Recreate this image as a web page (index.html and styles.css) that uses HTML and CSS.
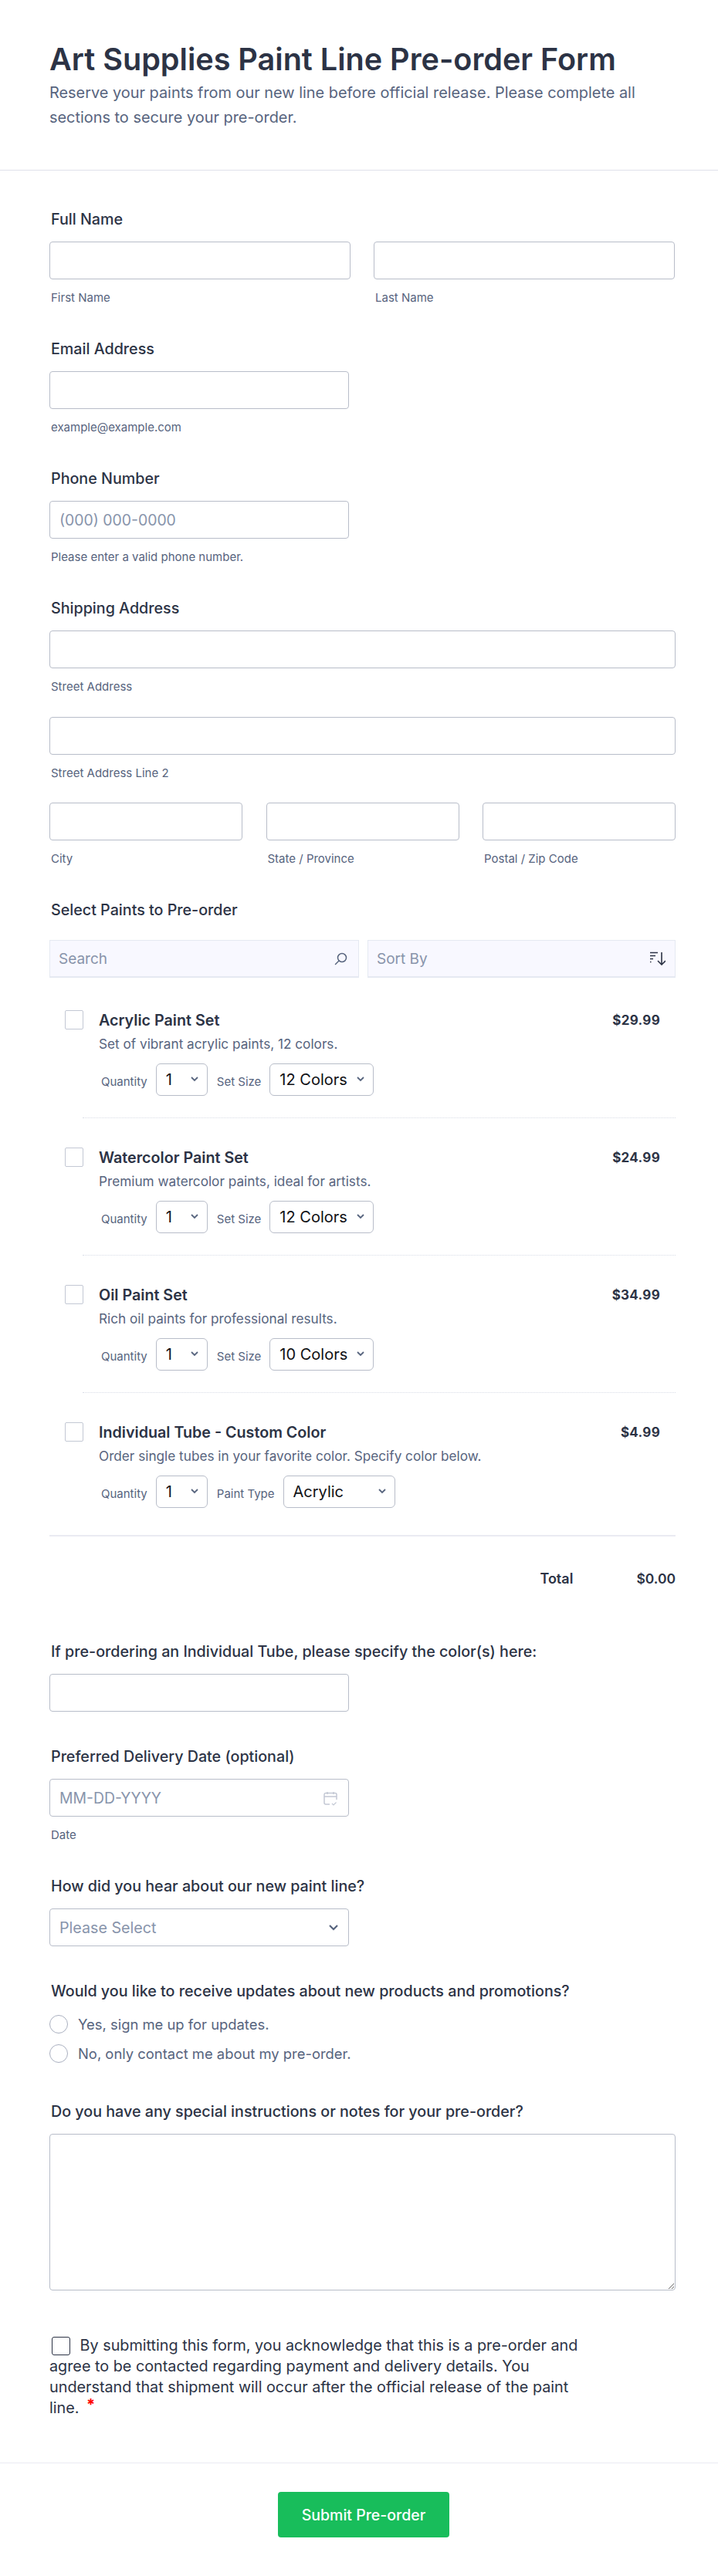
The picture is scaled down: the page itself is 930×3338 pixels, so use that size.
FILE: index.html
```html
<!DOCTYPE html>
<html lang="en">
<head>
    <meta charset="UTF-8">
    <meta name="viewport" content="width=device-width, initial-scale=1.0">
    <title>Art Supplies Paint Line Pre-order Form</title>
    <link rel="stylesheet" href="styles.css">
</head>
<body>
    <div class="header">
        <h1>Art Supplies Paint Line Pre-order Form</h1>
        <p>Reserve your paints from our new line before official release. Please complete all sections to secure your pre-order.</p>
    </div>
    <form class="form">
        <div class="field">
            <label class="label">Full Name</label>
            <div class="row two">
                <div><input type="text"><span class="sub">First Name</span></div>
                <div><input type="text"><span class="sub">Last Name</span></div>
            </div>
        </div>
        <div class="field half">
            <label class="label">Email Address</label>
            <input type="text">
            <span class="sub">example@example.com</span>
        </div>
        <div class="field half">
            <label class="label">Phone Number</label>
            <input type="text" placeholder="(000) 000-0000">
            <span class="sub">Please enter a valid phone number.</span>
        </div>
        <div class="field">
            <label class="label">Shipping Address</label>
            <div class="line"><input type="text"><span class="sub">Street Address</span></div>
            <div class="line"><input type="text"><span class="sub">Street Address Line 2</span></div>
            <div class="row three">
                <div><input type="text"><span class="sub">City</span></div>
                <div><input type="text"><span class="sub">State / Province</span></div>
                <div><input type="text"><span class="sub">Postal / Zip Code</span></div>
            </div>
        </div>
        <div class="field products">
            <label class="label">Select Paints to Pre-order</label>
            <div class="tools">
                <div class="tool search">
                    <span>Search</span>
                    <svg width="17" height="17" viewBox="0 0 17 17" fill="none" stroke="#57647e" stroke-width="1.5"><circle cx="10" cy="7" r="5.500"/><path d="M6 11 1.500 15.500" stroke-linecap="round"/></svg>
                </div>
                <div class="tool">
                    <span>Sort By</span>
                    <svg width="20" height="18" viewBox="0 0 20 18" fill="none" stroke="#2c3345" stroke-width="1.6"><path d="M0 1.500h10M0 5.500h7M0 9.500h4M0 13.500h1.500"/><path d="M15 1v16M10 12l5 5 5-5"/></svg>
                </div>
            </div>

            <div class="item">
                <input type="checkbox" class="check">
                <div class="item-body">
                    <div class="item-top"><b>Acrylic Paint Set</b><strong>$29.99</strong></div>
                    <p>Set of vibrant acrylic paints, 12 colors.</p>
                    <div class="options">
                        <span>Quantity</span>
                        <select class="qty"><option>1</option></select>
                        <span>Set Size</span>
                        <select class="size"><option>12 Colors</option></select>
                    </div>
                </div>
            </div>
            <div class="item">
                <input type="checkbox" class="check">
                <div class="item-body">
                    <div class="item-top"><b>Watercolor Paint Set</b><strong>$24.99</strong></div>
                    <p>Premium watercolor paints, ideal for artists.</p>
                    <div class="options">
                        <span>Quantity</span>
                        <select class="qty"><option>1</option></select>
                        <span>Set Size</span>
                        <select class="size"><option>12 Colors</option></select>
                    </div>
                </div>
            </div>
            <div class="item">
                <input type="checkbox" class="check">
                <div class="item-body">
                    <div class="item-top"><b>Oil Paint Set</b><strong>$34.99</strong></div>
                    <p>Rich oil paints for professional results.</p>
                    <div class="options">
                        <span>Quantity</span>
                        <select class="qty"><option>1</option></select>
                        <span>Set Size</span>
                        <select class="size"><option>10 Colors</option></select>
                    </div>
                </div>
            </div>
            <div class="item last">
                <input type="checkbox" class="check">
                <div class="item-body">
                    <div class="item-top"><b>Individual Tube - Custom Color</b><strong>$4.99</strong></div>
                    <p>Order single tubes in your favorite color. Specify color below.</p>
                    <div class="options">
                        <span>Quantity</span>
                        <select class="qty"><option>1</option></select>
                        <span>Paint Type</span>
                        <select class="type"><option>Acrylic</option></select>
                    </div>
                </div>
            </div>
            <div class="total"><b>Total</b><strong>$0.00</strong></div>
        </div>
        <div class="field half">
            <label class="label">If pre-ordering an Individual Tube, please specify the color(s) here:</label>
            <input type="text">
        </div>
        <div class="field half">
            <label class="label">Preferred Delivery Date (optional)</label>
            <div class="date">
                <input type="text" placeholder="MM-DD-YYYY">
                <svg width="18" height="19" viewBox="0 0 18 19" fill="none" stroke="#c3c8d4" stroke-width="1.500"><path d="M8 17H3a2 2 0 0 1-2-2V4.500a2 2 0 0 1 2-2h12a2 2 0 0 1 2 2V11M1 7h16M5 1v3M13 1v3"/><path d="m11 16 2 2 3.500-3.500" stroke-width="1.200"/></svg>
            </div>
            <span class="sub">Date</span>
        </div>
        <div class="field half">
            <label class="label">How did you hear about our new paint line?</label>
            <select class="dropdown"><option>Please Select</option></select>
        </div>
        <div class="field radio-field">
            <label class="label">Would you like to receive updates about new products and promotions?</label>
            <div class="radios">
                <label><input type="radio" name="updates"> Yes, sign me up for updates.</label>
                <label><input type="radio" name="updates"> No, only contact me about my pre-order.</label>
            </div>
        </div>
        <div class="field">
            <label class="label">Do you have any special instructions or notes for your pre-order?</label>
            <textarea></textarea>
        </div>
        <div class="agree">
            <input type="checkbox"> By submitting this form, you acknowledge that this is a pre-order and agree to be contacted regarding payment and delivery details. You understand that shipment will occur after the official release of the paint line. <span class="req">*</span>
        </div>
    </form>
    <div class="footer">
        <button type="button">Submit Pre-order</button>
    </div>
</body>
</html>
```

FILE: styles.css
```css
* {
    box-sizing: border-box;
}
body {
    font-family: 'Inter', sans-serif;
    margin: 0;
    padding: 0;
    background-color: #fff;
    color: #2c3345;
}
.header {
    height: 221px;
    padding: 50px 55px 0 64px;
    border-bottom: 1px solid #dfe1ea;
}
.header h1 {
    margin: 0;
    font-size: 39.600px;
    line-height: 54px;
    font-weight: 600;
}
.header p {
    margin: 0;
    font-size: 19.900px;
    line-height: 32px;
    color: #57647e;
}
.form {
    padding: 51px 55px 0 64px;
}
.field {
    margin-bottom: 46px;
}
.half {
    width: 388px;
}
.label {
    display: block;
    font-size: 19.700px;
    line-height: 24px;
    font-weight: 450;
    margin-bottom: 17px;
    padding-left: 2px;
    white-space: nowrap;
}
.sub {
    display: block;
    font-size: 15px;
    line-height: 16px;
    margin-top: 16px;
    padding-left: 2px;
    color: #57647e;
}
input[type="text"] {
    display: block;
    width: 100%;
    height: 49px;
    padding: 0 12px;
    border: 1px solid #b8bdc9;
    border-radius: 4px;
    font-family: inherit;
    font-size: 19.400px;
    color: #2c3345;
    background-color: #fff;
}
input::placeholder {
    color: #8894ab;
    opacity: 1;
}
.row {
    display: grid;
}
.two {
    grid-template-columns: 390px 390px;
    gap: 30px;
}
.three {
    grid-template-columns: repeat(3, 250px);
    gap: 30.500px;
}
.line {
    margin-bottom: 30.500px;
}
.products {
    margin-bottom: 0;
}
.tools {
    display: flex;
    gap: 11px;
    margin-top: 27px;
}
.tool {
    flex: 1;
    height: 49px;
    display: flex;
    align-items: center;
    justify-content: space-between;
    padding: 0 12px 0 11px;
    background-color: #f8f8ff;
    border: 1px solid #e5e9f2;
    border-bottom-width: 2px;
    font-size: 19px;
    color: #8894ab;
}
.tool.search {
    padding-right: 14px;
}
.item {
    display: flex;
    margin-left: 43px;
    padding: 39px 0 28px;
    border-bottom: 1px dotted #d8dce6;
}
.tools + .item {
    padding-top: 43px;
}
.item.last {
    margin-left: 0;
    padding: 39px 0 35px 20px;
    border-bottom: 2px solid #eaebf2;
}
.check {
    appearance: none;
    flex: none;
    width: 24px;
    height: 25px;
    margin: -1px 20px 0 -23px;
    border: 1px solid #c3c8d4;
    border-radius: 2px;
    background-color: #fff;
}
.item.last .check {
    margin-left: 0;
}
.item-body {
    flex: 1;
}
.item-top {
    display: flex;
    justify-content: space-between;
    align-items: center;
    padding-right: 20px;
    line-height: 24px;
}
.item-top b {
    font-size: 19.700px;
    font-weight: 600;
}
.item-top strong {
    font-size: 17px;
    font-weight: 700;
    letter-spacing: 0.3px;
}
.item-body p {
    margin: 7px 0 0;
    font-size: 17.200px;
    line-height: 24px;
    color: #57647e;
}
.options {
    display: flex;
    align-items: center;
    margin-top: 13px;
    font-size: 15px;
    color: #57647e;
}
.options span {
    margin: 4px 11px 0 3px;
}
.options select {
    margin-right: 9px;
}
select {
    appearance: none;
    height: 42px;
    padding: 0 10px 0 12px;
    border: 1px solid #b8bdc9;
    border-radius: 6px;
    font-family: inherit;
    font-size: 20px;
    color: #0f1014;
    background: #fff url("data:image/svg+xml,%3Csvg xmlns='http://www.w3.org/2000/svg' width='10' height='7' fill='none' stroke='%2357647e' stroke-width='1.800'%3E%3Cpath d='m1 1 4 4 4-4'/%3E%3C/svg%3E") no-repeat right 11px top 16px;
}
.qty {
    width: 67px;
}
.size {
    width: 135px;
}
.type {
    width: 145px;
}
.total {
    display: flex;
    justify-content: flex-end;
    align-items: center;
    margin-top: 42px;
    margin-bottom: 69px;
    line-height: 26px;
}
.total b {
    font-size: 18px;
    font-weight: 600;
    margin-right: 82px;
}
.total strong {
    font-size: 17.500px;
    font-weight: 600;
}
.date {
    position: relative;
}
.date svg {
    position: absolute;
    right: 15px;
    top: 16px;
}
.dropdown {
    display: block;
    width: 100%;
    height: 49px;
    border-radius: 4px;
    font-size: 19.700px;
    color: #8894ab;
    background-image: url("data:image/svg+xml,%3Csvg xmlns='http://www.w3.org/2000/svg' width='12' height='8' fill='none' stroke='%2357647e' stroke-width='2.200'%3E%3Cpath d='m1 1 5 5 5-5'/%3E%3C/svg%3E");
    background-position: right 13px center;
}
.radio-field {
    margin-bottom: 44px;
}
.radios {
    margin-top: -5px;
}
.radios label {
    display: flex;
    align-items: center;
    gap: 13px;
    height: 38px;
    font-size: 18.400px;
    color: #57647e;
}
.radios input {
    appearance: none;
    width: 24px;
    height: 24px;
    margin: 0;
    border: 1px solid #a9afbf;
    border-radius: 50%;
    background-color: #fff;
}
textarea {
    display: block;
    width: 100%;
    height: 203px;
    border: 1px solid #b8bdc9;
    border-radius: 4px;
    background-color: #fff;
}
.agree {
    width: 690px;
    font-size: 19.800px;
    line-height: 27px;
    color: #2c3345;
    margin-top: 58px;
}
.agree input {
    appearance: none;
    width: 24px;
    height: 24px;
    margin: 0 7px 0 3px;
    vertical-align: -6px;
    border: 1.500px solid #2c3345;
    border-radius: 3px;
}
.req {
    color: #f00;
    font-size: 20px;
    font-weight: 700;
    line-height: 16px;
    margin-left: 4px;
    position: relative;
    top: -4px;
}
.footer {
    margin-top: 57px;
    height: 147px;
    padding: 37px 0 0 12px;
    border-top: 1px solid #eaebf2;
    text-align: center;
}
.footer button {
    width: 222px;
    height: 59px;
    border: none;
    border-radius: 4px;
    background-color: #18bd5b;
    color: #fff;
    font-family: inherit;
    font-size: 19.500px;
    font-weight: 500;
    cursor: pointer;
}
```
